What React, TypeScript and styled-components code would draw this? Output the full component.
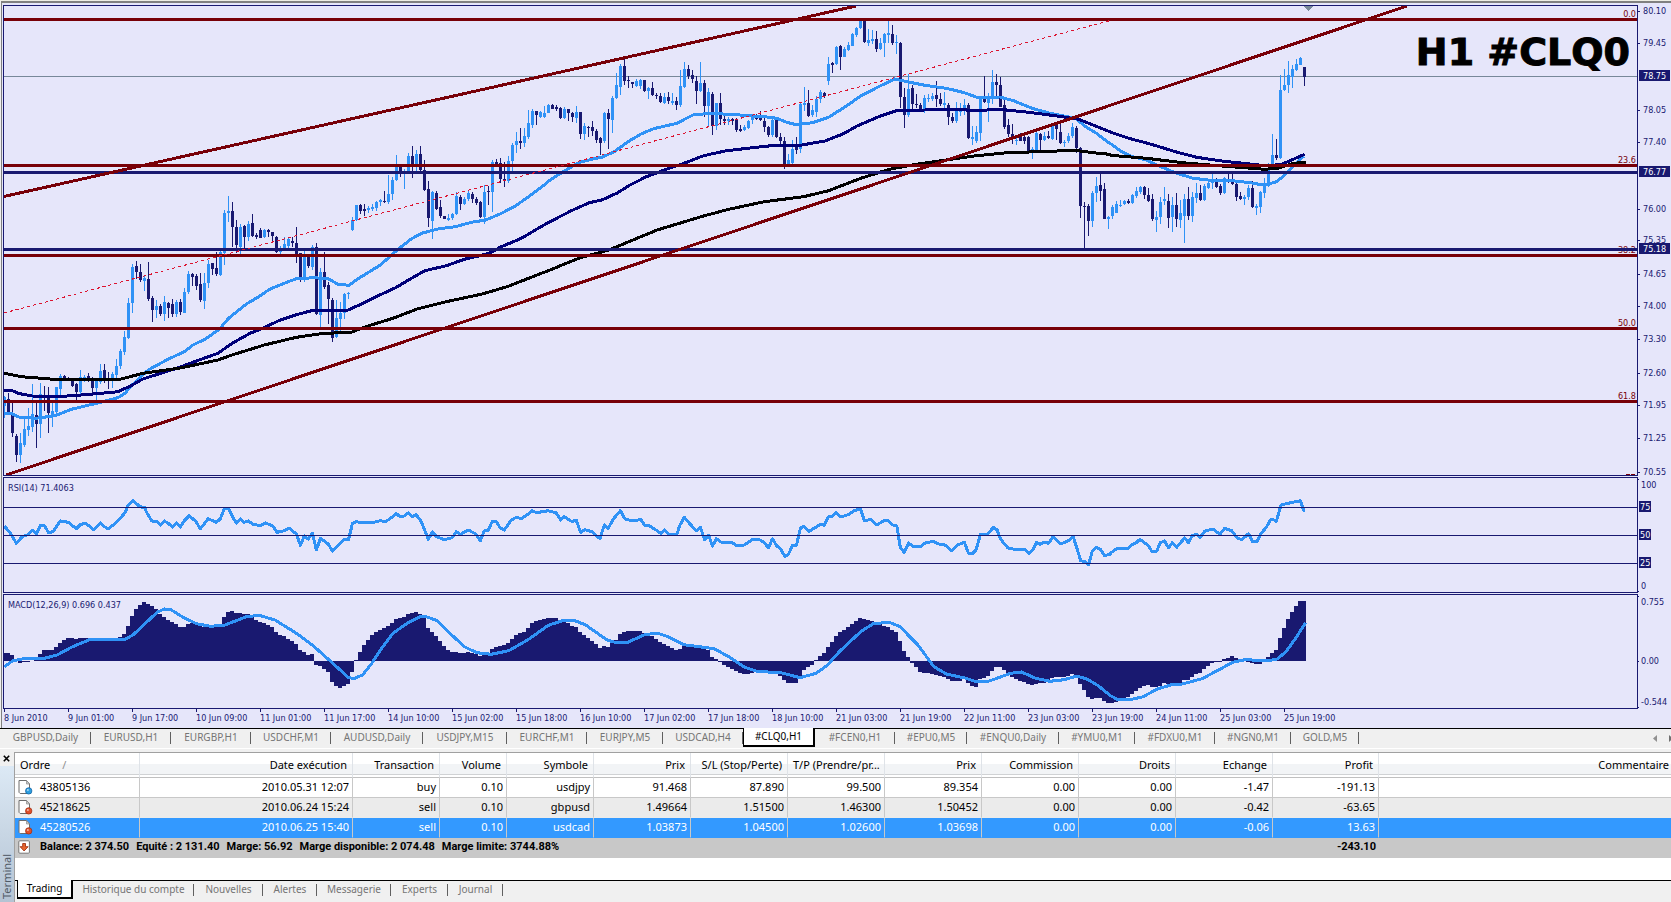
import React from "react";
import styled, { createGlobalStyle, css } from "styled-components";

/* ---------- palette and type ---------- */

const navy = "#191970";
const sky = "#2f92f6";
const maroon = "#780008";
const plotBg = "#e6e6fa";
const uiFont = `"Noto Sans", "Open Sans", sans-serif`;
const chartFont = `"DejaVu Sans Condensed", "Noto Sans", sans-serif`;

/* ---------- market data ---------- */

// Vertical samples are kept in thirds of a pixel, horizontal ones in 1/2.8 px.
const Y_UNIT = 3;
const X_UNIT = 2.8;
const BAR = 4;

// One bar per entry: direction, high, body top, body bottom, low.
const CANDLES = `
u1188,1190,1218,1255 d1180,1198,1238,1245 d1208,1240,1300,1312 d1303,1307,1364,1385 u1300,1328,1364,1388
u1248,1288,1335,1340 u1225,1277,1290,1308 u1152,1243,1280,1295 d1200,1245,1272,1345 u1150,1183,1273,1313
d1158,1184,1190,1232 d1160,1186,1240,1300 u1205,1232,1248,1280 u1160,1162,1237,1250 u1122,1128,1166,1185
d1124,1128,1136,1140 d1130,1134,1140,1143 d1138,1142,1157,1160 d1150,1152,1177,1200 u1110,1132,1175,1187
u1126,1130,1140,1147 d1120,1128,1138,1145 d1130,1138,1164,1180 u1140,1143,1165,1208 u1093,1114,1145,1153
d1092,1110,1137,1150 d1117,1134,1142,1168 u1115,1122,1143,1165 u1078,1098,1124,1137 u1048,1052,1098,1108
u993,1012,1055,1065 u893,908,1014,1017 u792,800,908,938 d783,798,816,838 d792,815,840,846
u825,833,843,873 d785,838,897,902 d888,893,930,965 u900,917,930,953 d912,917,942,947
u888,905,942,963 d905,908,925,955 d897,911,942,952 u900,905,942,950 d898,905,935,945
u865,876,938,940 u812,822,877,883 d820,822,830,858 d822,828,857,870 d820,853,900,905
u820,850,902,928 u780,792,850,865 d788,790,808,825 d757,805,822,828 u750,757,824,828
u630,640,760,795 u588,632,638,665 d605,634,682,740 d660,682,735,758 u672,680,740,770
d675,678,710,743 u662,672,710,722 d643,670,708,712 d700,706,712,716 d684,690,713,715
u686,690,712,714 d686,690,696,712 d696,697,708,722 d709,712,756,760 u738,744,757,762
u710,732,747,750 u712,716,738,746 d710,722,728,742 d682,728,765,790 d758,760,840,845
u750,762,838,845 d763,767,798,805 u735,742,800,810 d730,742,943,946 u805,815,945,990
d755,815,860,866 d845,856,898,972 d893,900,1015,1025 u900,955,1010,1015 u905,940,958,1000
u880,882,940,957 u876,879,882,898 u650,660,690,692 u615,616,660,662 d612,615,633,642
d612,627,632,648 u618,625,630,640 u612,622,627,632 u603,606,625,632 u597,600,606,618
d573,602,605,608 u525,582,607,612 u530,540,582,600 u465,498,540,543 d495,500,522,530
u508,512,523,568 u460,467,513,518 d438,468,492,534 u450,462,492,518 d438,462,510,520
d480,510,570,573 d543,568,655,682 u572,576,662,718 d572,578,626,630 d600,620,648,653
d647,649,656,658 u642,653,660,663 u638,642,655,660 u576,588,643,645 d586,590,612,630
u592,596,613,615 u573,580,597,602 d576,582,596,608 d592,598,608,614 d603,606,650,655
u556,575,652,672 d558,572,575,615 u480,486,577,636 d476,485,492,500 d474,488,536,548
d487,536,544,560 u468,482,542,550 u430,435,482,520 u396,424,435,460 d385,422,428,448
u385,408,430,442 u330,368,412,416 u328,332,374,384 d333,334,344,374 u332,336,350,353
u318,340,350,353 u312,316,338,340 d312,314,326,328 d316,322,328,332 d322,325,354,356
u322,328,354,356 d326,328,340,364 d335,340,352,366 u317,336,355,370 d335,337,402,416
u368,378,402,420 d377,380,384,412 d362,382,393,408 d388,393,420,430 d410,415,428,466
u337,340,424,430 d328,338,358,447 u288,294,360,398 u220,256,294,296 u193,198,260,286
d170,198,243,255 d227,240,244,265 d245,247,252,263 u238,242,258,260 u237,240,258,268
d239,240,272,275 u262,264,274,297 d246,264,284,288 d280,284,288,298 d278,288,306,310
u280,292,310,312 d275,292,303,312 u278,303,308,314 d292,302,315,330 u210,258,315,322
u186,206,260,265 d195,206,228,238 d210,225,236,248 d228,243,272,312 u185,250,272,275
d240,250,318,352 u265,277,318,382 d275,283,378,404 u308,310,378,390 d280,310,358,375
d346,356,362,374 u350,357,362,374 d355,358,363,374 d354,356,390,395 d375,386,392,397
u376,380,391,394 u360,362,384,386 u345,352,360,372 d342,347,358,360 d333,345,360,364
d345,362,380,396 d378,382,406,412 u355,360,404,412 d355,358,410,414 d398,410,424,440
d412,423,498,506 u462,480,498,500 u420,446,488,492 d410,440,450,462 u308,312,447,458
u262,308,314,334 d270,308,348,352 u315,330,346,352 u288,298,335,352 u270,275,298,308
d275,278,288,295 u170,192,242,255 d186,190,194,220 u137,140,192,194 d135,137,170,210
u142,146,170,172 u125,136,150,154 u98,103,137,138 u82,84,105,112 u62,63,84,88
d62,64,127,130 u87,120,128,138 u90,118,122,132 d92,118,148,156 u115,130,146,150
u98,103,128,172 u62,100,104,130 d75,103,128,136 u104,125,130,163 d127,130,290,325
d265,290,346,384 u222,266,346,352 d255,265,312,327 d283,312,316,325 d310,314,330,332
u285,294,330,340 u282,294,298,305 u278,287,296,304 d243,286,297,322 d278,296,312,318
u276,308,316,325 d310,314,350,375 d340,350,364,368 u305,330,364,368 u310,325,335,348
u298,315,330,346 d310,314,414,418 u378,412,416,435 u378,397,422,430 u290,294,400,422
d228,295,306,310 u280,292,308,366 u210,246,296,312 d222,245,256,290 d232,256,320,322
d300,316,380,388 d358,376,402,412 d372,403,418,432 u408,420,424,434 d400,410,422,424
d397,410,422,432 d408,410,454,460 u442,446,460,476 u395,400,450,454 d400,402,420,450
u397,408,420,422 d392,407,414,418 u370,376,416,420 d370,374,388,420 d370,395,428,432
u420,426,430,440 u400,408,424,430 u370,382,408,414 d377,384,444,458 d440,443,618,655
d605,618,620,745 d612,618,662,708 u573,578,662,680 u532,557,580,606 d518,555,572,602
d550,568,656,658 u648,650,656,686 u616,622,648,656 u604,612,638,640 u600,614,618,622
u600,602,612,614 d598,603,608,611 u582,586,610,612 u560,573,588,595 u558,560,576,582
d558,560,586,598 d565,584,603,606 d582,598,656,664 u632,652,660,695 u590,606,650,672
u562,598,604,615 d582,602,653,684 u590,615,652,695 d580,615,658,680 u600,640,660,685
u582,598,648,728 d560,598,647,660 u575,592,648,665 u550,578,594,610 d556,578,600,604
u553,558,600,602 u547,550,564,566 u520,542,550,566 d535,543,560,564 d553,558,580,585
u530,535,580,582 d522,537,541,550 d522,538,552,556 d548,552,590,604 d575,588,596,600
u585,592,598,614 u555,564,592,600 d542,563,620,624 u613,619,623,644 u572,576,620,638
u533,556,580,595 u490,503,558,562 u402,466,506,508 d417,466,475,480 u225,270,474,476
u208,256,270,272 u182,225,256,278 u196,208,230,263 u178,192,210,214 u170,174,194,196
d200,201,230,258`
  .trim()
  .split(/\s+/)
  .map((entry) => ({
    up: entry[0] === "u",
    y: entry.slice(1).split(",").map((v) => Math.round(Number(v) / Y_UNIT)),
  }));

const MACD_ZERO = 573;
const MACD_BARS = `
548 548 556 573 578 576 575 572 565 552 541 541 541 531 519 510 503 504 507 504 504 504 505 506 505 504 505 505 505 501
491 467 437 417 404 397 402 409 417 433 441 449 456 462 471 471 462 458 463 468 471 472 472 472 464 440 426 423 428 429
431 432 440 449 456 460 465 472 486 495 499 506 513 523 540 547 556 553 584 587 597 607 636 647 654 648 641 605 571 546
525 509 496 485 479 474 468 460 448 443 440 433 430 427 432 444 474 485 497 513 529 541 546 547 549 549 547 549 553 557
555 551 536 530 527 526 520 507 496 490 485 473 460 453 450 448 445 444 444 450 456 459 468 471 487 495 504 514 523 535
528 531 520 510 492 486 484 483 483 484 489 495 498 507 516 521 528 534 540 538 528 530 531 533 532 537 541 560 566 577
584 590 598 602 608 611 612 608 605 604 604 606 608 608 617 630 638 638 638 618 600 591 584 571 559 549 530 516 497 487
479 470 461 452 444 446 450 452 457 462 468 472 480 487 514 544 560 579 592 605 608 610 613 614 617 622 628 633 633 633
628 640 647 650 628 625 617 602 591 592 600 612 622 627 632 637 642 645 642 638 638 634 624 622 620 622 619 612 617 642
660 681 686 684 684 692 698 698 695 690 687 680 672 663 654 648 645 650 651 648 640 642 640 640 638 630 629 620 612 608
597 588 579 576 576 568 563 558 565 571 572 576 579 581 581 572 562 549 541 504 474 447 426 408 393 393`
  .trim()
  .split(/\s+/)
  .map(Number);

// Each trace is stored as three strips that start at these pixel offsets.
const STRIPS = [-4, 546, 1107];

const FAST_MA = [
  "12,1240 35,1242 55,1252 100,1255 155,1247 200,1228 270,1210 330,1193 350,1180 370,1155 415,1110 470,1078 516,1055 540,1035 575,1017 615,987 640,955 690,912 720,893 755,868 800,848 830,836 880,833 920,837 945,852 977,856 1000,838 1065,795 1110,752 1150,718 1180,700 1230,686 1275,680 1320,667 1360,660 1400,642 1440,620 1480,590 1520,558",
  "0,540 40,513 80,488 120,477 145,472 180,455 220,424 255,402 290,386 355,370 400,345 450,340 520,344 600,350 635,355 660,366 690,374 735,368 780,352 830,318 870,288 920,260 965,237 1000,245 1050,256 1110,265 1160,278 1195,292 1260,291 1300,303 1350,325 1400,340 1450,350 1475,358 1500,380 1530,400 1567,430",
  "0,432 30,455 60,470 100,480 130,496 180,518 230,535 290,542 340,542 390,548 425,555 460,547 480,532 510,500 540,468",
];
const MID_MA = [
  "12,1170 35,1172 50,1180 90,1188 160,1190 240,1184 330,1175 365,1158 400,1137 450,1120 500,1103 550,1083 610,1060 650,1030 700,1000 740,983 780,962 830,944 880,930 975,930 1020,908 1065,884 1110,862 1150,836 1190,812 1250,797 1300,778 1340,768 1370,760 1400,742 1460,715 1510,683",
  "0,665 60,632 110,608 145,600 190,578 220,557 270,530 320,510 370,492 430,467 490,453 560,444 620,437 700,436 770,423 820,402 860,378 920,350 970,332 1050,330 1120,327 1180,331 1270,329 1340,337 1420,348 1480,358 1520,375 1567,395",
  "0,397 50,415 110,432 180,455 240,472 310,483 390,492 440,498 480,492 542,463",
];
const SLOW_MA = [
  "12,1120 60,1130 150,1138 340,1137 400,1120 510,1103 610,1080 650,1065 740,1035 830,1012 900,1001 985,996 1030,978 1100,955 1170,926 1250,905 1350,882 1420,860 1480,835",
  "0,810 80,775 165,750 210,730 300,690 430,648 500,628 600,605 710,590 780,572 870,535 950,508 1030,492 1110,480 1180,469 1280,458 1370,455 1470,451 1520,458 1567,463",
  "0,466 100,475 200,488 310,498 430,508 470,504 510,490 545,487",
];
const RSI = [
  "12,168 28,188 46,220 62,200 78,194 91,181 102,192 113,167 124,167 137,189 149,184 169,153 191,157 214,176 225,164 238,159 250,168 261,180 281,159 292,170 303,176 325,158 351,127 359,105 372,92 392,110 405,113 412,130 425,153 438,154 449,165 460,153 471,160 483,171 494,158 505,171 516,152 530,137 548,154 561,176 583,146 606,157 617,146 628,117 640,116 651,140 662,159 673,147 684,157 696,153 710,164 730,166 743,159 763,167 776,187 796,182 810,175 830,192 841,226 852,198 863,207 875,190 886,240 897,205 919,222 931,243 965,208 976,208 987,160 998,155 1010,158 1042,158 1065,152 1078,155 1090,148 1110,131 1121,141 1132,138 1143,129 1154,140 1165,134 1177,150 1188,177 1199,208 1211,186 1222,200 1244,209 1266,203 1278,185 1289,193 1311,180 1331,191 1345,212 1356,183 1367,182 1378,155 1390,155 1400,173 1412,180 1432,150 1446,142 1460,146 1479,132 1490,122 1502,128 1535,122",
  "0,124 17,128 30,150 40,140 62,155 73,150 86,187 98,179 118,185 129,198 140,206 152,165 163,175 178,146 197,122 210,147 230,152 255,149 266,167 275,165 300,182 311,191 320,180 333,192 355,195 363,167 376,142 390,160 410,182 421,172 433,209 444,196 455,228 466,206 478,216 510,217 520,226 545,225 565,209 585,208 598,217 612,233 623,206 635,228 645,236 658,260 668,252 679,226 690,226 701,175 710,169 726,184 745,171 757,163 768,166 779,141 790,140 801,128 814,141 835,134 850,123 869,116 880,151 900,149 915,165 935,152 947,152 960,165 971,168 981,233 992,247 1004,219 1015,228 1037,231 1048,220 1072,214 1095,225 1105,224 1125,243 1140,226 1160,217 1172,250 1182,252 1193,240 1205,193 1225,192 1242,172 1252,180 1262,208 1282,234 1300,238 1328,237 1342,250 1352,240 1362,217 1372,223 1384,217 1396,220 1408,200 1430,222 1450,213 1465,200 1474,230 1486,272 1498,275 1508,284 1518,245 1530,232 1541,238 1552,256 1567,254",
  "0,248 15,237 47,235 58,225 70,219 81,208 104,226 115,245 128,243 138,218 150,213 161,233 172,218 184,232 206,204 217,218 228,196 240,194 250,202 262,184 285,177 305,193 318,175 338,182 355,206 368,208 385,191 396,214 408,216 420,191 436,170 446,150 455,149 463,154 476,105 500,99 530,92 541,125",
];
const SIGNAL = [
  "12,590 35,573 65,566 125,565 160,555 200,532 250,509 350,508 372,495 400,467 440,427 460,417 480,420 510,440 550,461 590,469 630,465 690,440 725,436 770,450 830,490 880,530 930,578 975,622 990,626 1015,615 1040,582 1065,540 1100,490 1140,460 1175,441 1190,439 1225,452 1260,490 1300,530 1335,548 1375,553 1425,542 1480,508 1530,470",
  "0,464 35,452 70,452 100,465 160,510 185,518 215,518 265,494 300,489 330,500 375,524 460,536 500,560 545,592 580,604 650,609 700,623 745,610 775,587 810,545 870,485 905,461 950,457 980,470 1030,525 1075,590 1110,612 1165,625 1190,634 1230,633 1290,610 1320,606 1360,625 1400,634 1440,629 1475,618 1505,628 1535,647 1567,675",
  "0,678 20,689 50,690 90,680 130,657 170,644 200,642 255,626 305,598 340,577 375,569 440,572 465,567 490,545 520,500 545,458",
];

const toPoints = (strips: string[], top: number) =>
  strips
    .flatMap((strip, i) =>
      strip.split(" ").map((pair) => {
        const [x, y] = pair.split(",").map(Number);
        return `${(STRIPS[i] + x / X_UNIT).toFixed(1)},${(y / Y_UNIT - top).toFixed(1)}`;
      }),
    )
    .join(" ");

const PRICE_SCALE: [string, number][] = [
  ["80.10", 11], ["79.45", 43], ["78.05", 110], ["77.40", 142], ["76.00", 209], ["75.35", 240], ["74.65", 274],
  ["74.00", 306], ["73.30", 339], ["72.60", 373], ["71.95", 405], ["71.25", 438], ["70.55", 472],
];
const PRICE_TAGS: [string, number][] = [["78.75", 76], ["76.77", 172], ["75.18", 249]];
const FIBO: [string, number][] = [["0.0", 19], ["23.6", 165], ["38.2", 255], ["50.0", 328], ["61.8", 401]];

const DATES = [
  "8 Jun 2010", "9 Jun 01:00", "9 Jun 17:00", "10 Jun 09:00", "11 Jun 01:00", "11 Jun 17:00", "14 Jun 10:00",
  "15 Jun 02:00", "15 Jun 18:00", "16 Jun 10:00", "17 Jun 02:00", "17 Jun 18:00", "18 Jun 10:00", "21 Jun 03:00",
  "21 Jun 19:00", "22 Jun 11:00", "23 Jun 03:00", "23 Jun 19:00", "24 Jun 11:00", "25 Jun 03:00", "25 Jun 19:00",
];

const CHART_TABS: [string, number][] = [
  ["GBPUSD,Daily", 91], ["EURUSD,H1", 80], ["EURGBP,H1", 80], ["USDCHF,M1", 80], ["AUDUSD,Daily", 92],
  ["USDJPY,M15", 84], ["EURCHF,M1", 80], ["EURJPY,M5", 76], ["USDCAD,H4", 80], ["#CLQ0,H1", 72],
  ["#FCEN0,H1", 80], ["#EPU0,M5", 72], ["#ENQU0,Daily", 92], ["#YMU0,M1", 76], ["#FDXU0,M1", 80],
  ["#NGN0,M1", 76], ["GOLD,M5", 68],
];
const TERMINAL_TABS: [string, number][] = [
  ["Trading", 56], ["Historique du compte", 121], ["Nouvelles", 69], ["Alertes", 54], ["Messagerie", 74],
  ["Experts", 57], ["Journal", 55],
];

const COLUMNS: [string, number | undefined][] = [
  ["Ordre", 125], ["Date exécution", 213], ["Transaction", 87], ["Volume", 67], ["Symbole", 87], ["Prix", 97],
  ["S/L (Stop/Perte)", 97], ["T/P (Prendre/pr...", 97], ["Prix", 97], ["Commission", 97], ["Droits", 97],
  ["Echange", 97], ["Profit", 106], ["Commentaire", undefined],
];
const ORDERS = [
  ["43805136", "2010.05.31 12:07", "buy", "0.10", "usdjpy", "91.468", "87.890", "99.500", "89.354", "0.00", "0.00", "-1.47", "-191.13", ""],
  ["45218625", "2010.06.24 15:24", "sell", "0.10", "gbpusd", "1.49664", "1.51500", "1.46300", "1.50452", "0.00", "0.00", "-0.42", "-63.65", ""],
  ["45280526", "2010.06.25 15:40", "sell", "0.10", "usdcad", "1.03873", "1.04500", "1.02600", "1.03698", "0.00", "0.00", "-0.06", "13.63", ""],
];
const BALANCE = [
  "Balance: 2 374.50", "Equité : 2 131.40", "Marge: 56.92", "Marge disponible: 2 074.48", "Marge limite: 3744.88%",
];

/* ---------- styled parts ---------- */

const GlobalStyle = createGlobalStyle`
  *, *::before, *::after { box-sizing: border-box; }
  body { margin: 0; background: #f0f0f0; overflow: hidden; }
`;

const Page = styled.div`
  display: flex;
  flex-direction: column;
  min-height: 100vh;
  font-family: ${uiFont};
  font-size: 11px;
  color: #000;
`;

const ChartWindow = styled.main`
  display: flex;
  flex-direction: column;
  gap: 1px;
  padding: 4px 0 0 2px;
  border-top: 1px solid #eeeee4;
  border-left: 1px solid #f0f0f0;
  background: ${plotBg};
  box-shadow: inset 1px 2px 0 #808080;
`;

const PanelRow = styled.section<{ $height: number }>`
  display: flex;
  height: ${(p) => p.$height}px;
`;

const Plot = styled.svg`
  flex: 1;
  min-width: 0;
  border: 1px solid ${navy};
  shape-rendering: crispEdges;
`;

const Scale = styled.svg`
  flex: none;
  width: 33px;
  height: 100%;
  overflow: visible;
  shape-rendering: crispEdges;
`;

const ChartText = styled.text<{ $fill?: string }>`
  font-family: ${chartFont};
  font-size: 9px;
  fill: ${(p) => p.$fill ?? navy};
`;

const Caption = styled.text`
  font-family: "DejaVu Sans", "Liberation Sans", sans-serif;
  font-size: 38px;
  font-weight: 700;
  fill: #000;
  stroke: #000;
  stroke-width: 1px;
`;

const DateAxis = styled.div`
  display: flex;
  height: 19px;
  margin-left: 1px;
  margin-top: -1px;
`;

const DateMark = styled.time`
  flex: none;
  width: 64px;
  font-family: ${chartFont};
  font-size: 9px;
  line-height: 12px;
  color: ${navy};
  white-space: nowrap;
  &::before {
    content: "";
    display: block;
    width: 1px;
    height: 3px;
    background: ${navy};
  }
`;

const TabBar = styled.nav<{ $height: number; $indent: number }>`
  display: flex;
  flex: none;
  align-items: flex-start;
  height: ${(p) => p.$height}px;
  padding-left: ${(p) => p.$indent}px;
  border-top: 1px solid #000;
  background: #f0f0f0;
`;

const Tab = styled.button<{ $width: number; $active?: boolean }>`
  position: relative;
  flex: none;
  width: ${(p) => p.$width}px;
  height: 18px;
  padding: 0 0 1px;
  border: 0;
  background: none;
  font: inherit;
  font-size: 10px;
  line-height: 15px;
  color: #757575;
  white-space: nowrap;
  &::after {
    content: "";
    position: absolute;
    top: 3px;
    right: 0;
    width: 1px;
    height: 12px;
    background: #606060;
  }
  ${(p) =>
    p.$active &&
    css`
      height: 19px;
      margin-top: -1px;
      border: 1px solid #000;
      border-top: 0;
      border-right-width: 2px;
      border-bottom-width: 2px;
      background: #fff;
      color: #000;
      &::after { display: none; }
    `}
`;

const TabArrows = styled.div`
  display: flex;
  gap: 12px;
  margin: 6px -2px 0 auto;
`;

const ArrowButton = styled.button`
  display: flex;
  padding: 0;
  border: 0;
  background: none;
`;

const Terminal = styled.section`
  display: flex;
  flex: 1;
  border-top: 1px solid #fff;
`;

const SideRail = styled.div`
  display: flex;
  flex-direction: column;
  flex: none;
  width: 14px;
  padding-top: 3px;
`;

const CloseButton = styled.button`
  display: flex;
  height: 14px;
  padding: 3px 0 0 3px;
  border: 0;
  background: none;
`;

const RailTitle = styled.h2`
  display: flex;
  flex: 1;
  justify-content: flex-start;
  align-items: center;
  margin: 0;
  padding: 3px 0 0;
  background: linear-gradient(#b4c3d3, #dce9f5);
  font-size: 11px;
  font-weight: 400;
  line-height: 14px;
  color: #505a66;
  writing-mode: vertical-rl;
  transform: rotate(180deg);
`;

const TerminalBody = styled.div`
  display: flex;
  flex: 1;
  flex-direction: column;
  min-width: 0;
  margin-top: 3px;
  border-top: 1px solid #a0a0a0;
  border-left: 1px solid #a0a0a0;
  background: #fff;
`;

const Spacer = styled.div`
  flex: 1;
`;

const OrderTable = styled.table`
  width: 100%;
  table-layout: fixed;
  border-collapse: separate;
  border-spacing: 0;
`;

const HeadCell = styled.th<{ $left?: boolean }>`
  height: 25px;
  padding: 0 5px 1px;
  border-right: 1px solid #dfe3e8;
  border-bottom: 1px solid #c0c0c0;
  background: linear-gradient(#fff 0 45%, #f2f4f6 45% 88%, #d0d2d4 88% 92%, #fff 92%);
  font-weight: 400;
  line-height: 16px;
  text-align: ${(p) => (p.$left ? "left" : "right")};
  white-space: nowrap;
  &:last-child { border-right: 0; padding-right: 2px; }
`;

const SortMark = styled.span`
  margin-left: 12px;
  color: #909090;
`;

const Row = styled.tr<{ $tone: "plain" | "shade" | "selected" }>`
  background: ${(p) => ({ plain: "#fff", shade: "#ebebeb", selected: "#3399ff" })[p.$tone]};
  color: ${(p) => (p.$tone === "selected" ? "#fff" : "#000")};
`;

const Cell = styled.td<{ $first?: boolean }>`
  height: 20px;
  padding: 0 3px 1px;
  border-right: 1px solid #c8c8c8;
  border-bottom: 1px solid #c8c8c8;
  line-height: 18px;
  text-align: ${(p) => (p.$first ? "left" : "right")};
  white-space: nowrap;
  ${Row}:nth-child(n + 2) & { border-bottom-color: transparent; }
  &:last-child { border-right: 0; }
`;

const TotalCell = styled.td`
  height: 20px;
  padding: 0 3px 2px;
  background: #c8c8c8;
  font-family: Roboto, "Noto Sans", sans-serif;
  font-weight: 700;
  line-height: 18px;
  text-align: right;
`;

const WithIcon = styled.div`
  display: flex;
  align-items: center;
  gap: 7px;
  white-space: pre;
`;

const Totals = styled.div`
  display: flex;
  gap: 7px;
`;

/* ---------- icons ---------- */

const OrderIcon = ({ buy }: { buy: boolean }) => (
  <svg width="15" height="16" viewBox="0 0 15 16" aria-hidden="true">
    <path d="M1 1.5h7.5l3 3.5v9.5H2.2L1 13.3z" fill="#fff" stroke="#6c6c6c" />
    <path d="M8.5 1.5V5h3z" fill="#d0d0d0" stroke="#8a8a8a" strokeWidth=".7" />
    <circle cx="10.7" cy="11.9" r="3.2" fill={buy ? "#2e9fe0" : "#e0502a"} stroke={buy ? "#0f5c9c" : "#9c2a10"} strokeWidth=".7" />
    <circle cx="9.9" cy="10.9" r="1" fill="#fff" opacity=".6" />
  </svg>
);

const BalanceIcon = () => (
  <svg width="15" height="16" viewBox="0 0 15 16" aria-hidden="true">
    <rect x=".8" y="1.8" width="10.6" height="12.4" rx="1" fill="#fff" stroke="#777" />
    <path d="M4.7 4.5h2.8v3.2h2.6L6.1 12 2.1 7.7h2.6z" fill="#e8642c" stroke="#a03214" strokeWidth=".9" />
  </svg>
);

/* ---------- chart panels ---------- */

const HLine = ({ y, color, width = 3 }: { y: number; color: string; width?: number }) => (
  <rect x="0" y={y - (width - 1) / 2} width="100%" height={width} fill={color} />
);

const Trace = ({ points, color }: { points: string; color: string }) => (
  <polyline points={points} fill="none" stroke={color} strokeWidth="3" strokeLinejoin="round" />
);

const Tick = ({ y, length = 2 }: { y: number; length?: number }) => (
  <rect x="0" y={y} width={length} height="1" fill={navy} />
);

const PRICE_TOP = 6;

const PricePanel = () => (
  <PanelRow $height={471}>
    <Plot role="img" aria-label="#CLQ0 H1">
      <HLine y={76 - PRICE_TOP} color="#778899" width={1} />
      {CANDLES.map(({ up, y: [high, top, bottom, low] }, i) => (
        <g key={i} fill={up ? sky : navy}>
          <rect x={i * BAR} y={high - PRICE_TOP} width="1" height={Math.max(1, low - high)} />
          <rect x={i * BAR - 1} y={top - PRICE_TOP} width="3" height={Math.max(1, bottom - top)} />
        </g>
      ))}
      <Trace points={toPoints(FAST_MA, PRICE_TOP)} color={sky} />
      <Trace points={toPoints(MID_MA, PRICE_TOP)} color="#000078" />
      <Trace points={toPoints(SLOW_MA, PRICE_TOP)} color="#000" />
      {FIBO.map(([label, y]) => (
        <React.Fragment key={label}>
          <HLine y={y - PRICE_TOP} color={maroon} />
          <ChartText x="100%" dx="-1" y={y - PRICE_TOP - 2} textAnchor="end" $fill={maroon}>{label}</ChartText>
        </React.Fragment>
      ))}
      <HLine y={172 - PRICE_TOP} color={navy} />
      <HLine y={249 - PRICE_TOP} color={navy} />
      <path d="M0 190.5 852 0M2 469 1403 0" stroke={maroon} strokeWidth="3" />
      <path d="M0 307 1106 14.6" stroke="#dc1430" strokeDasharray="3 3" />
      <path d="M1299 0h10l-5 5z" fill="#778899" />
      <svg x="100%" overflow="visible">
        <path d="M-11 468.5h4M-6 468.5h4" stroke={maroon} />
      </svg>
      <Caption x="100%" dx="-7" y="59" textAnchor="end">H1 #CLQ0</Caption>
    </Plot>
    <Scale>
      {PRICE_SCALE.map(([label, y]) => (
        <React.Fragment key={label}>
          <Tick y={y - 5} />
          <ChartText x="5" y={y - 2}>{label}</ChartText>
        </React.Fragment>
      ))}
      {PRICE_TAGS.map(([label, y]) => (
        <React.Fragment key={label}>
          <rect x="1" y={y - 11} width="31" height="11" fill={navy} />
          <ChartText x="5" y={y - 2} $fill="#fff">{label}</ChartText>
        </React.Fragment>
      ))}
    </Scale>
  </PanelRow>
);

const RsiPanel = () => (
  <PanelRow $height={116}>
    <Plot role="img" aria-label="RSI">
      <Trace points={toPoints(RSI, 8)} color={sky} />
      {[29, 57, 85].map((y) => <HLine key={y} y={y} color={navy} width={1} />)}
      <ChartText x="4" y="13">RSI(14) 71.4063</ChartText>
    </Plot>
    <Scale>
      <Tick y={2} length={1} />
      <ChartText x="3" y="11">100</ChartText>
      {[["75", 30], ["50", 58], ["25", 86]].map(([label, y]) => (
        <React.Fragment key={label}>
          <rect x="1" y={Number(y) - 6} width="12" height="11" fill={navy} />
          <ChartText x="2" y={Number(y) + 3} $fill="#fff">{label}</ChartText>
        </React.Fragment>
      ))}
      <ChartText x="3" y="112">0</ChartText>
      <Tick y={114} length={1} />
    </Scale>
  </PanelRow>
);

const MACD_TOP = 125;

const MacdPanel = () => {
  const zero = Math.round(MACD_ZERO / Y_UNIT) - MACD_TOP;
  return (
    <PanelRow $height={115}>
      <Plot role="img" aria-label="MACD">
        {MACD_BARS.map((value, i) => {
          const y = Math.round(value / Y_UNIT) - MACD_TOP;
          return (
            <rect key={i} x={i * BAR - 2} y={Math.min(y, zero)} width={BAR} height={Math.abs(y - zero)} fill={navy} />
          );
        })}
        <Trace points={toPoints(SIGNAL, MACD_TOP)} color={sky} />
        <ChartText x="4" y="13">MACD(12,26,9) 0.696 0.437</ChartText>
      </Plot>
      <Scale>
        <Tick y={2} length={1} />
        <ChartText x="3" y="11">0.755</ChartText>
        <Tick y={67} length={1} />
        <ChartText x="3" y="70">0.00</ChartText>
        <ChartText x="3" y="111">-0.544</ChartText>
        <Tick y={113} length={1} />
      </Scale>
    </PanelRow>
  );
};

/* ---------- page ---------- */

export default function App() {
  return (
    <Page>
      <GlobalStyle />
      <ChartWindow>
        <PricePanel />
        <RsiPanel />
        <MacdPanel />
        <DateAxis>
          {DATES.map((d) => <DateMark key={d}>{d}</DateMark>)}
        </DateAxis>
      </ChartWindow>
      <TabBar $height={20} $indent={0} aria-label="Charts">
        {CHART_TABS.map(([name, width]) => (
          <Tab key={name} type="button" $width={width} $active={name === "#CLQ0,H1"}>{name}</Tab>
        ))}
        <TabArrows>
          <ArrowButton type="button" aria-label="Previous">
            <svg width="4" height="7"><path d="M4 0v7L0 3.5z" fill="#909090" /></svg>
          </ArrowButton>
          <ArrowButton type="button" aria-label="Next">
            <svg width="4" height="7"><path d="M0 0v7l4-3.5z" fill="#707070" /></svg>
          </ArrowButton>
        </TabArrows>
      </TabBar>
      <Terminal>
        <SideRail>
          <CloseButton type="button" aria-label="Close">
            <svg width="7" height="7"><path d="M.8.8l5.4 5.4M6.2.8.8 6.2" stroke="#000" strokeWidth="1.6" /></svg>
          </CloseButton>
          <RailTitle>Terminal</RailTitle>
        </SideRail>
        <TerminalBody>
          <OrderTable>
            <colgroup>
              {COLUMNS.map(([, width], i) => <col key={i} width={width} />)}
            </colgroup>
            <thead>
              <tr>
                {COLUMNS.map(([name], i) => (
                  <HeadCell key={i} scope="col" $left={i === 0}>
                    {name}
                    {i === 0 && <SortMark>/</SortMark>}
                  </HeadCell>
                ))}
              </tr>
            </thead>
            <tbody>
              {ORDERS.map((order, r) => (
                <Row key={order[0]} $tone={(["plain", "shade", "selected"] as const)[r]}>
                  {order.map((value, c) => (
                    <Cell key={c} $first={c === 0}>
                      {c === 0 ? <WithIcon><OrderIcon buy={order[2] === "buy"} />{value}</WithIcon> : value}
                    </Cell>
                  ))}
                </Row>
              ))}
              <tr>
                <TotalCell colSpan={12}>
                  <WithIcon>
                    <BalanceIcon />
                    <Totals>{BALANCE.map((t) => <span key={t}>{t}</span>)}</Totals>
                  </WithIcon>
                </TotalCell>
                <TotalCell>-243.10</TotalCell>
                <TotalCell />
              </tr>
            </tbody>
          </OrderTable>
          <Spacer />
          <TabBar $height={22} $indent={2} aria-label="Terminal">
            {TERMINAL_TABS.map(([name, width]) => (
              <Tab key={name} type="button" $width={width} $active={name === "Trading"}>{name}</Tab>
            ))}
          </TabBar>
        </TerminalBody>
      </Terminal>
    </Page>
  );
}
